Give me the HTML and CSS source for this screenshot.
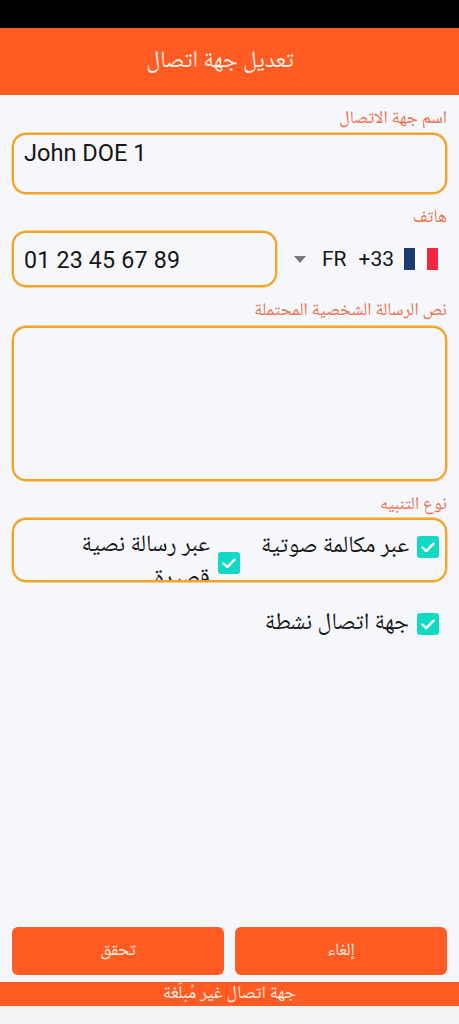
FILE: index.html
```html
<!DOCTYPE html>
<html lang="ar" dir="rtl">
<head>
<meta charset="utf-8">
<title>تعديل جهة اتصال</title>
<link rel="stylesheet" href="styles.css">
</head>
<body>
<div class="status"></div>
<header class="top">تعديل جهة اتصال</header>
<main class="form">
  <label class="lbl lbl-first">اسم جهة الاتصال</label>
  <div class="box name-box" dir="ltr">John DOE 1</div>
  <label class="lbl lbl-phone">هاتف</label>
  <div class="phone">
    <div class="country" dir="ltr">
      <span class="caret"></span>
      <span class="iso">FR</span>
      <span class="dial">+33</span>
      <span class="flag"><i class="fb"></i><i class="fw"></i><i class="fr"></i></span>
    </div>
    <div class="box phone-box" dir="ltr">01 23 45 67 89</div>
  </div>
  <label class="lbl lbl-msg">نص الرسالة الشخصية المحتملة</label>
  <div class="box msg-box"></div>
  <label class="lbl lbl-type">نوع التنبيه</label>
  <div class="box type-box">
    <div class="opt opt-call">
      <span class="chk"><svg viewBox="0 0 22 22"><path d="M5.5 11.5l3.8 3.6 7.2-7.4"/></svg></span>
      <span class="opt-text">عبر مكالمة صوتية</span>
    </div>
    <div class="opt opt-sms">
      <span class="chk"><svg viewBox="0 0 22 22"><path d="M5.5 11.5l3.8 3.6 7.2-7.4"/></svg></span>
      <span class="opt-text">عبر رسالة نصية قصيرة</span>
    </div>
  </div>
  <div class="opt active">
    <span class="chk"><svg viewBox="0 0 22 22"><path d="M5.5 11.5l3.8 3.6 7.2-7.4"/></svg></span>
    <span class="opt-text">جهة اتصال نشطة</span>
  </div>
</main>
<div class="actions">
  <button class="btn">إلغاء</button>
  <button class="btn">تحقق</button>
</div>
<footer class="notice">جهة اتصال غير مُبلَغة</footer>
</body>
</html>
```
FILE: styles.css
```css
* { box-sizing: border-box; }
html, body { height: 100%; }
body {
  margin: 0;
  height: 1024px;
  overflow: hidden;
  background: #f2f2f3;
  font-family: "Noto Naskh Arabic", "Noto Sans Arabic", Roboto, "DejaVu Sans", sans-serif;
  display: flex;
  flex-direction: column;
  position: relative;
}
.status { height: 28px; background: #000; flex: none; }
.top {
  height: 67px;
  flex: none;
  background: #ff5b22;
  color: #fdf1ea;
  font-size: 23.5px;
  padding-right: 19px;
  display: flex;
  align-items: center;
  justify-content: center;
}
.form {
  height: 887px;
  flex: none;
  background: #f5f7fb;
  padding: 0 12px;
  display: flex;
  flex-direction: column;
}
.lbl {
  display: block;
  color: #e9704b;
  font-size: 17.8px;
  line-height: 18px;
  height: 18px;
  flex: none;
}
.lbl-first { margin-top: 15px; margin-bottom: 5px; }
.lbl-phone { margin-top: 15px; margin-bottom: 4px; }
.lbl-msg { margin-top: 15px; margin-bottom: 6px; }
.lbl-type { margin-top: 15px; margin-bottom: 4px; }
.box {
  border: 2px solid #f2a327;
  border-radius: 14px;
  box-shadow: 0 0 0 .4px #f2a327;
  flex: none;
  color: #151515;
  font-family: Roboto, sans-serif;
  font-size: 23.6px;
}
.name-box { height: 61px; padding: 3px 10px; line-height: 30px; width: 435px; }
.phone { display: flex; align-items: center; height: 56px; flex: none; justify-content: space-between; }
.phone-box { width: 265px; height: 56px; line-height: 54px; padding: 0 10px; font-size: 23.2px; letter-spacing: .2px; }
.country { display: flex; align-items: center; justify-content: flex-end; width: 170px; padding-right: 9px; color: #151515; font-family: Roboto, sans-serif; font-size: 21px; }
.caret { width: 0; height: 0; border: 6px solid transparent; border-top: 7px solid #77777c; border-bottom: 0; margin-right: 16px; }
.iso { margin-right: 12px; }
.dial { margin-right: 10px; }
.flag { display: flex; width: 34px; height: 22px; }
.flag i { flex: 1; }
.fb { background: #1a3d6e; }
.fw { background: #fff; }
.fr { background: #f6253f; }
.msg-box { height: 155px; width: 435px; }
.type-box {
  height: 64px;
  width: 435px;
  overflow: hidden;
  display: flex;
  align-items: flex-start;
  font-family: inherit;
  padding: 0;
}
.opt { display: flex; align-items: center; color: #151515; font-family: inherit; }
.opt-text { font-size: 23.5px; line-height: 33px; }
.chk { width: 22px; height: 22px; background: #12d8c6; border-radius: 3px; flex: none; margin-left: 8px; }
.chk svg { display: block; width: 22px; height: 22px; fill: none; stroke: #fff; stroke-width: 2.4; stroke-linecap: round; stroke-linejoin: round; }
.opt-call { width: 205px; height: 54px; padding-right: 6px; white-space: nowrap; flex: none; }
.opt-sms { width: 170px; height: 86px; flex: none; }
.active { height: 30px; margin-top: 27px; padding-right: 8px; width: 100%; justify-content: flex-start; }
.actions {
  position: absolute;
  top: 927px;
  left: 12px;
  right: 12px;
  display: flex;
  justify-content: space-between;
}
.btn {
  width: 212px;
  height: 48px;
  background: #ff5b22;
  border: 0;
  border-radius: 6px;
  color: #fdeee6;
  font-family: inherit;
  font-size: 17.5px;
}
.notice {
  position: absolute;
  top: 982px;
  left: 0;
  right: 0;
  height: 24px;
  background: #ff5b22;
  color: #fdf1ea;
  font-size: 17.8px;
  line-height: 24px;
  text-align: center;
}
```
